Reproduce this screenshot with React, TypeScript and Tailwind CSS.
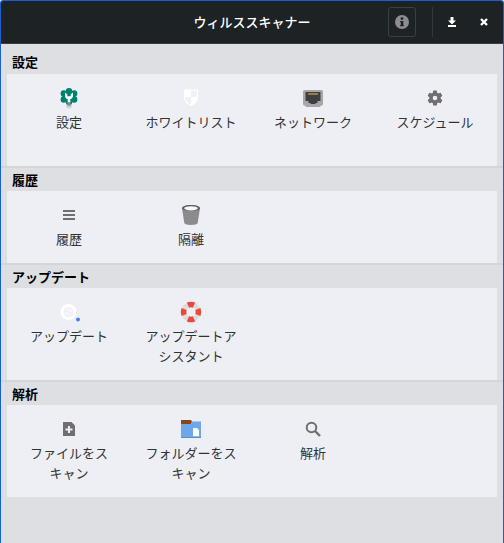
import React from "react";

const F = "font-['Noto_Sans_CJK_JP','Noto_Sans',sans-serif]";

const SettingsIcon = () => (
  <svg width="24" height="24" viewBox="0 0 24 24">
    <circle cx="12" cy="19.500" r="3" fill="#d2d3d6" />
    <g fill="#00806f">
      <circle cx="12" cy="10.500" r="6.500" />
      <circle cx="12" cy="5.200" r="3.200" />
      <circle cx="12" cy="15.800" r="3.200" />
      <circle cx="6.800" cy="7.500" r="3.200" />
      <circle cx="17.200" cy="7.500" r="3.200" />
      <circle cx="6.800" cy="13.500" r="3.200" />
      <circle cx="17.200" cy="13.500" r="3.200" />
    </g>
    <path d="M8 6.500v3.200c0 1.800 1.200 3 2.700 3.400V17h2.600v-3.900c1.500-.4 2.700-1.600 2.700-3.400V6.500l-2.300 1.700v2h-3.400v-2z" fill="#fff" />
    <rect x="10.800" y="16" width="2.400" height="4" fill="#8f8f92" />
  </svg>
);
const ShieldIcon = () => (
  <svg width="24" height="24" viewBox="0 0 24 24">
    <path d="M5 3.500h14v8c0 4-3.500 7-7 8.500-3.500-1.500-7-4.500-7-8.500z" fill="#fff" />
    <path d="M12 4.500h5.800v6.500H12zM6.200 11H12v7.500c-2.500-1-5.800-3.500-5.800-7z" fill="#f0f1f4" />
  </svg>
);
const NetworkIcon = () => (
  <svg width="24" height="24" viewBox="0 0 24 24">
    <path d="M2 5.500A1.500 1.500 0 0 1 3.500 4h17A1.500 1.500 0 0 1 22 5.500V18a1.500 1.500 0 0 1-1.500 1.500l-2 1.500h-13l-2-1.500A1.500 1.500 0 0 1 2 18z" fill="#a7a7aa" />
    <path d="M4.500 6h15v9h-3v2h-2v1h-5v-1h-2v-2h-3z" fill="#3e3e40" />
    <g fill="#e8c04e"><rect x="7.500" y="7" width="1" height="2" /><rect x="9.500" y="7" width="1" height="2" /><rect x="11.500" y="7" width="1" height="2" /><rect x="13.500" y="7" width="1" height="2" /><rect x="15.500" y="7" width="1" height="2" /></g>
  </svg>
);
const GearIcon = () => (
  <svg width="24" height="24" viewBox="0 0 24 24">
    <g fill="#6f6f72">
      <rect x="10" y="4.500" width="4" height="15" rx="0.600" />
      <rect x="10" y="4.500" width="4" height="15" rx="0.600" transform="rotate(60 12 12)" />
      <rect x="10" y="4.500" width="4" height="15" rx="0.600" transform="rotate(120 12 12)" />
      <circle cx="12" cy="12" r="5.800" />
    </g>
    <circle cx="12" cy="12" r="2.300" fill="#eeeff4" />
  </svg>
);
const ListIcon = () => (
  <svg width="24" height="24" viewBox="0 0 24 24">
    <path fill="#6f6f72" d="M6 7h12v2H6zM6 11h12v2H6zM6 15h12v2H6z" />
  </svg>
);
const BucketIcon = () => (
  <svg width="24" height="24" viewBox="0 0 24 24">
    <path d="M3 5.500C3 3.400 7 2 12 2s9 1.400 9 3.500c0 .4-.1.800-.2 1.100L18.700 20c-.3 1.300-3 2-6.700 2s-6.400-.7-6.700-2L3.200 6.600C3.100 6.300 3 5.900 3 5.500z" fill="#8b8b8e" />
    <path d="M3 5.500C3 3.400 7 2 12 2s9 1.400 9 3.500c-1 1.400-1.500 2-9 2.200C6 7.500 4 7 3 5.500z" fill="#5f5f62" />
    <ellipse cx="12" cy="5.300" rx="6.800" ry="2.100" fill="#f8f8f8" />
  </svg>
);
const UpdateIcon = () => (
  <svg width="24" height="24" viewBox="0 0 24 24">
    <circle cx="11.500" cy="12" r="6.500" fill="none" stroke="#fff" strokeWidth="3" />
    <path d="M8 11.500a3.600 3.600 0 0 1 6.200-2l1-.8V12h-3.300l1-1a2 2 0 0 0-3.400.5zM15 13a3.600 3.600 0 0 1-6.200 1.500l-1 .8V12h3.300l-1 1a2 2 0 0 0 3.400-.1z" fill="#f8f8fa" />
    <circle cx="21" cy="19.500" r="2" fill="#3b82f6" />
  </svg>
);
const BuoyIcon = () => (
  <svg width="24" height="24" viewBox="0 0 24 24">
    <circle cx="12" cy="12" r="7.500" fill="none" stroke="#dcdcdc" strokeWidth="5" />
    <g fill="none" stroke="#e9483a" strokeWidth="5.600">
      <path d="M9 5.120A7.500 7.500 0 0 1 15 5.120" />
      <path d="M9 5.120A7.500 7.500 0 0 1 15 5.120" transform="rotate(90 12 12)" />
      <path d="M9 5.120A7.500 7.500 0 0 1 15 5.120" transform="rotate(180 12 12)" />
      <path d="M9 5.120A7.500 7.500 0 0 1 15 5.120" transform="rotate(270 12 12)" />
    </g>
  </svg>
);
const FileIcon = () => (
  <svg width="24" height="24" viewBox="0 0 24 24">
    <path d="M6 5h8.500L18 8.500V19H6z" fill="#6f6f72" />
    <path d="M11 9h2v2.500h2.500v2H13V16h-2v-2.500H8.500v-2H11z" fill="#eeeff4" />
  </svg>
);
const FolderIcon = () => (
  <svg width="24" height="24" viewBox="0 0 24 24">
    <path d="M2 3h10l1 1.500L12 7H2z" fill="#8b4513" />
    <path d="M2 7h10l1-2.500H22V21H2z" fill="#6ea6ea" />
    <path d="M2 20.300h20v.7H2z" fill="#4f86c9" />
    <path d="M14 11h4l2 2v6.300h-6z" fill="#fff" />
  </svg>
);
const SearchIcon = () => (
  <svg width="24" height="24" viewBox="0 0 24 24">
    <circle cx="10.500" cy="10.500" r="4.800" fill="none" stroke="#6f6f72" strokeWidth="2" />
    <path d="M14 14l5 5" stroke="#6f6f72" strokeWidth="2.400" />
  </svg>
);

function Item({ icon, label }: { icon: React.ReactNode; label: string }) {
  return (
    <div className="w-[122px] flex flex-col items-center">
      <div className="h-6 mb-0.5 flex items-center justify-center">{icon}</div>
      <div lang="ja" className="text-[13px] leading-5 text-center text-[#2e3436] w-[100px] [line-break:strict]">{label}</div>
    </div>
  );
}

function Section({ title, first, minH, children }: { title: string; first?: boolean; minH: string; children: React.ReactNode }) {
  return (
    <section>
      <div className={first ? "pl-[11px] pt-[8px] h-[30px] text-[13px] leading-5 font-bold text-black" : "pl-[11px] border-t-2 border-[#d4d5d8] h-[25px] text-[13px] leading-[23px] font-bold text-black"}>
        {title}
      </div>
      <div className={`mx-[6px] bg-[#eeeff4] pt-3 px-px pb-3.5 flex ${minH}`}>{children}</div>
    </section>
  );
}

export default function App() {
  return (
    <div lang="ja" className={`w-[504px] h-[543px] bg-[#dedfe3] border-t border-x border-[#1a5fd0] rounded-t-[3px] overflow-hidden ${F}`}>
      <header className="h-[43px] bg-[#1d2225] border-b border-[#3a3d40] flex items-center relative">
        <div className="absolute inset-x-0 text-center text-[13px] font-medium text-white">ウィルススキャナー</div>
        <div className="ml-auto flex items-center h-full relative">
          <button className="w-[28px] h-[30px] border border-[#3a3f42] rounded-[3px] flex items-center justify-center">
            <svg width="16" height="16" viewBox="0 0 16 16">
              <circle cx="8" cy="8" r="7" fill="#8b8d8f" />
              <rect x="6.800" y="7" width="2.500" height="5" fill="#1d2225" />
              <rect x="6" y="7" width="3" height="1" fill="#1d2225" />
              <rect x="6" y="11.200" width="4" height="1" fill="#1d2225" />
              <circle cx="8" cy="4.600" r="1.400" fill="#1d2225" />
            </svg>
          </button>
          <div className="w-px h-[30px] bg-[#32373a] ml-4 mr-[13px]" />
          <button className="w-3 h-3 flex items-center justify-center mr-5">
            <svg width="12" height="12" viewBox="0 0 12 12">
              <path d="M4.500 1h3v3.500H10L6 8.500 2 4.500h2.500zM2 9h8v2H2z" fill="#fff" />
            </svg>
          </button>
          <button className="w-3 h-3 flex items-center justify-center mr-[13px]">
            <svg width="10" height="10" viewBox="0 0 10 10">
              <path d="M2 2l6 6M8 2l-6 6" stroke="#fff" strokeWidth="2.400" />
            </svg>
          </button>
        </div>
      </header>
      <Section title="設定" first minH="min-h-[92px]">
        <Item icon={<SettingsIcon />} label="設定" />
        <Item icon={<ShieldIcon />} label="ホワイトリスト" />
        <Item icon={<NetworkIcon />} label="ネットワーク" />
        <Item icon={<GearIcon />} label="スケジュール" />
      </Section>
      <Section title="履歴" minH="min-h-[72px]">
        <Item icon={<ListIcon />} label="履歴" />
        <Item icon={<BucketIcon />} label="隔離" />
      </Section>
      <Section title="アップデート" minH="min-h-[92px]">
        <Item icon={<UpdateIcon />} label="アップデート" />
        <Item icon={<BuoyIcon />} label="アップデートアシスタント" />
      </Section>
      <Section title="解析" minH="min-h-[92px]">
        <Item icon={<FileIcon />} label={"ファイルをスキ\u2060ャン"} />
        <Item icon={<FolderIcon />} label="フォルダーをスキャン" />
        <Item icon={<SearchIcon />} label="解析" />
      </Section>
    </div>
  );
}
